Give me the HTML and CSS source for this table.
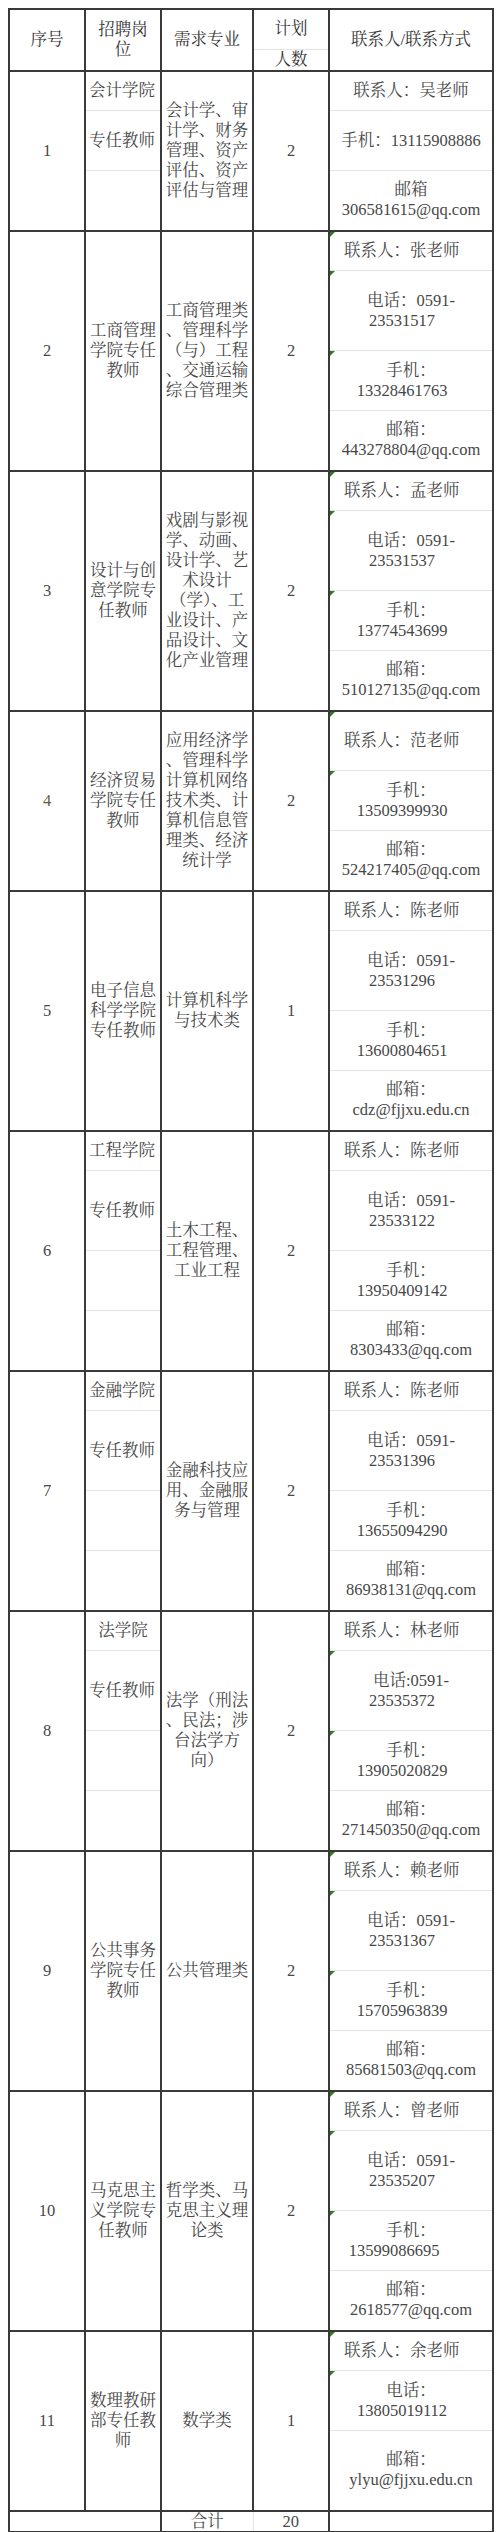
FILE: index.html
```html
<!DOCTYPE html>
<html lang="zh-CN">
<head>
<meta charset="utf-8">
<title>招聘岗位表</title>
<link rel="stylesheet" href="styles.css">
</head>
<body>
<table class="sheet">
  <colgroup>
    <col class="w-no"><col class="w-pos"><col class="w-major"><col class="w-num"><col class="w-contact">
  </colgroup>
  <thead>
    <tr class="g r40">
      <th rowspan="2">序号</th>
      <th rowspan="2">招聘岗<br>位</th>
      <th rowspan="2">需求专业</th>
      <th>计划</th>
      <th rowspan="2">联系人/联系方式</th>
    </tr>
    <tr class="r20"><th>人数</th></tr>
  </thead>
  <tbody>
    <!-- 1 -->
    <tr class="g r40">
      <td rowspan="3">1</td>
      <td class="pl">会计学院</td>
      <td rowspan="3">会计学、审<br>计学、财务<br>管理、资产<br>评估、资产<br>评估与管理</td>
      <td rowspan="3">2</td>
      <td>联系人：吴老师</td>
    </tr>
    <tr class="r60"><td class="pl">专任教师</td><td>手机：13115908886</td></tr>
    <tr class="r60"><td></td><td>邮箱<br>306581615@qq.com</td></tr>

    <!-- 2 -->
    <tr class="g r40">
      <td rowspan="4">2</td>
      <td rowspan="4">工商管理<br>学院专任<br>教师</td>
      <td rowspan="4">工商管理类<br>、管理科学<br>（与）工程<br>、交通运输<br>综合管理类</td>
      <td rowspan="4">2</td>
      <td class="lx mk">联系人：张老师</td>
    </tr>
    <tr class="r80"><td class="mk">电话：0591-<br><span class="n">23531517</span></td></tr>
    <tr class="r60"><td class="mk">手机：<br><span class="n">13328461763</span></td></tr>
    <tr class="r60"><td>邮箱：<br>443278804@qq.com</td></tr>

    <!-- 3 -->
    <tr class="g r40">
      <td rowspan="4">3</td>
      <td rowspan="4">设计与创<br>意学院专<br>任教师</td>
      <td rowspan="4">戏剧与影视<br>学、动画、<br>设计学、艺<br>术设计<br>（学）、工<br>业设计、产<br>品设计、文<br>化产业管理</td>
      <td rowspan="4">2</td>
      <td class="lx mk">联系人：孟老师</td>
    </tr>
    <tr class="r80"><td class="mk">电话：0591-<br><span class="n">23531537</span></td></tr>
    <tr class="r60"><td class="mk">手机：<br><span class="n">13774543699</span></td></tr>
    <tr class="r60"><td>邮箱：<br>510127135@qq.com</td></tr>

    <!-- 4 -->
    <tr class="g r60">
      <td rowspan="3" class="brown">4</td>
      <td rowspan="3">经济贸易<br>学院专任<br>教师</td>
      <td rowspan="3">应用经济学<br>、管理科学<br>计算机网络<br>技术类、计<br>算机信息管<br>理类、经济<br>统计学</td>
      <td rowspan="3">2</td>
      <td class="lx mk">联系人：范老师</td>
    </tr>
    <tr class="r60"><td class="mk">手机：<br><span class="n">13509399930</span></td></tr>
    <tr class="r60"><td>邮箱：<br>524217405@qq.com</td></tr>

    <!-- 5 -->
    <tr class="g r40">
      <td rowspan="4">5</td>
      <td rowspan="4">电子信息<br>科学学院<br>专任教师</td>
      <td rowspan="4">计算机科学<br>与技术类</td>
      <td rowspan="4">1</td>
      <td class="lx">联系人：陈老师</td>
    </tr>
    <tr class="r80"><td>电话：0591-<br><span class="n">23531296</span></td></tr>
    <tr class="r60"><td>手机：<br><span class="n">13600804651</span></td></tr>
    <tr class="r60"><td>邮箱：<br>cdz@fjjxu.edu.cn</td></tr>

    <!-- 6 -->
    <tr class="g r40">
      <td rowspan="4">6</td>
      <td class="pl">工程学院</td>
      <td rowspan="4">土木工程、<br>工程管理、<br>工业工程</td>
      <td rowspan="4">2</td>
      <td class="lx">联系人：陈老师</td>
    </tr>
    <tr class="r80"><td class="pl">专任教师</td><td>电话：0591-<br><span class="n">23533122</span></td></tr>
    <tr class="r60"><td></td><td>手机：<br><span class="n">13950409142</span></td></tr>
    <tr class="r60"><td></td><td>邮箱：<br>8303433@qq.com</td></tr>

    <!-- 7 -->
    <tr class="g r40">
      <td rowspan="4">7</td>
      <td class="pl">金融学院</td>
      <td rowspan="4">金融科技应<br>用、金融服<br>务与管理</td>
      <td rowspan="4">2</td>
      <td class="lx">联系人：陈老师</td>
    </tr>
    <tr class="r80"><td class="pl">专任教师</td><td>电话：0591-<br><span class="n">23531396</span></td></tr>
    <tr class="r60"><td></td><td>手机：<br><span class="n">13655094290</span></td></tr>
    <tr class="r60"><td></td><td>邮箱：<br>86938131@qq.com</td></tr>

    <!-- 8 -->
    <tr class="g r40">
      <td rowspan="4">8</td>
      <td>法学院</td>
      <td rowspan="4">法学（刑法<br>、民法；涉<br>台法学方<br>向）</td>
      <td rowspan="4">2</td>
      <td class="lx">联系人：林老师</td>
    </tr>
    <tr class="r80"><td class="pl">专任教师</td><td class="mk">电话:0591-<br><span class="n">23535372</span></td></tr>
    <tr class="r60"><td></td><td class="mk">手机：<br><span class="n">13905020829</span></td></tr>
    <tr class="r60"><td></td><td>邮箱：<br>271450350@qq.com</td></tr>

    <!-- 9 -->
    <tr class="g r40">
      <td rowspan="4">9</td>
      <td rowspan="4">公共事务<br>学院专任<br>教师</td>
      <td rowspan="4">公共管理类</td>
      <td rowspan="4">2</td>
      <td class="lx mk">联系人：赖老师</td>
    </tr>
    <tr class="r80"><td class="mk">电话：0591-<br><span class="n">23531367</span></td></tr>
    <tr class="r60"><td class="mk">手机：<br><span class="n">15705963839</span></td></tr>
    <tr class="r60"><td>邮箱：<br>85681503@qq.com</td></tr>

    <!-- 10 -->
    <tr class="g r40">
      <td rowspan="4">10</td>
      <td rowspan="4">马克思主<br>义学院专<br>任教师</td>
      <td rowspan="4">哲学类、马<br>克思主义理<br>论类</td>
      <td rowspan="4">2</td>
      <td class="lx mk">联系人：曾老师</td>
    </tr>
    <tr class="r80"><td class="mk">电话：0591-<br><span class="n">23535207</span></td></tr>
    <tr class="r60"><td class="mk">手机：<br><span class="n wide">13599086695</span></td></tr>
    <tr class="r60"><td>邮箱：<br>2618577@qq.com</td></tr>

    <!-- 11 -->
    <tr class="g r40">
      <td rowspan="3">11</td>
      <td rowspan="3">数理教研<br>部专任教<br>师</td>
      <td rowspan="3">数学类</td>
      <td rowspan="3">1</td>
      <td class="lx mk">联系人：余老师</td>
    </tr>
    <tr class="r60"><td class="mk">电话：<br><span class="n">13805019112</span></td></tr>
    <tr class="r80"><td>邮箱：<br>ylyu@fjjxu.edu.cn</td></tr>

    <!-- total -->
    <tr class="g total r21">
      <td colspan="2"></td>
      <td class="sum-l">合计</td>
      <td class="sum-r">20</td>
      <td></td>
    </tr>
  </tbody>
</table>
</body>
</html>
```

FILE: styles.css
```css
html, body {
  margin: 0;
  background: #ffffff;
}

body {
  padding: 8px 0 0 8px;
}

.sheet {
  border-collapse: collapse;
  table-layout: fixed;
  width: 486px;
  font-family: "Liberation Serif", "Noto Serif CJK SC", "Noto Sans CJK SC", serif;
  font-size: 16.5px;
  line-height: 20px;
  color: #474747;
}

.w-no { width: 76px; }
.w-pos { width: 76px; }
.w-major { width: 92px; }
.w-num { width: 76px; }
.w-contact { width: 164px; }

.sheet th,
.sheet td {
  position: relative;
  padding: 0;
  text-align: center;
  vertical-align: middle;
  font-weight: normal;
  border-left: 2px solid #3a3a3a;
  border-right: 2px solid #3a3a3a;
  border-top: 1px solid #e4e4e4;
  white-space: nowrap;
}

.sheet th {
  color: #333333;
}

.sheet tr.g > th,
.sheet tr.g > td {
  border-top: 2px solid #3a3a3a;
}

.sheet tr.total > td {
  border-bottom: 2px solid #3a3a3a;
  line-height: 19px;
}

.r20 { height: 20px; }
.r21 { height: 21px; }
.r40 { height: 40px; }
.r60 { height: 60px; }
.r80 { height: 80px; }

.sheet td.pl {
  text-align: left;
  padding-left: 3px;
}

.sheet td.lx {
  text-align: left;
  padding-left: 14px;
}

.n {
  padding-right: 18px;
}

.n.wide {
  padding-right: 34px;
}

.brown {
  color: #6e5a42;
}

.mk::before {
  content: "";
  position: absolute;
  left: 0;
  top: 0;
  width: 0;
  height: 0;
  border-top: 5px solid #2f7d1f;
  border-right: 5px solid transparent;
}

.sheet td.sum-l {
  border-right: 1px solid #e4e4e4;
}

.sheet td.sum-r {
  border-left: 1px solid #e4e4e4;
}
```
